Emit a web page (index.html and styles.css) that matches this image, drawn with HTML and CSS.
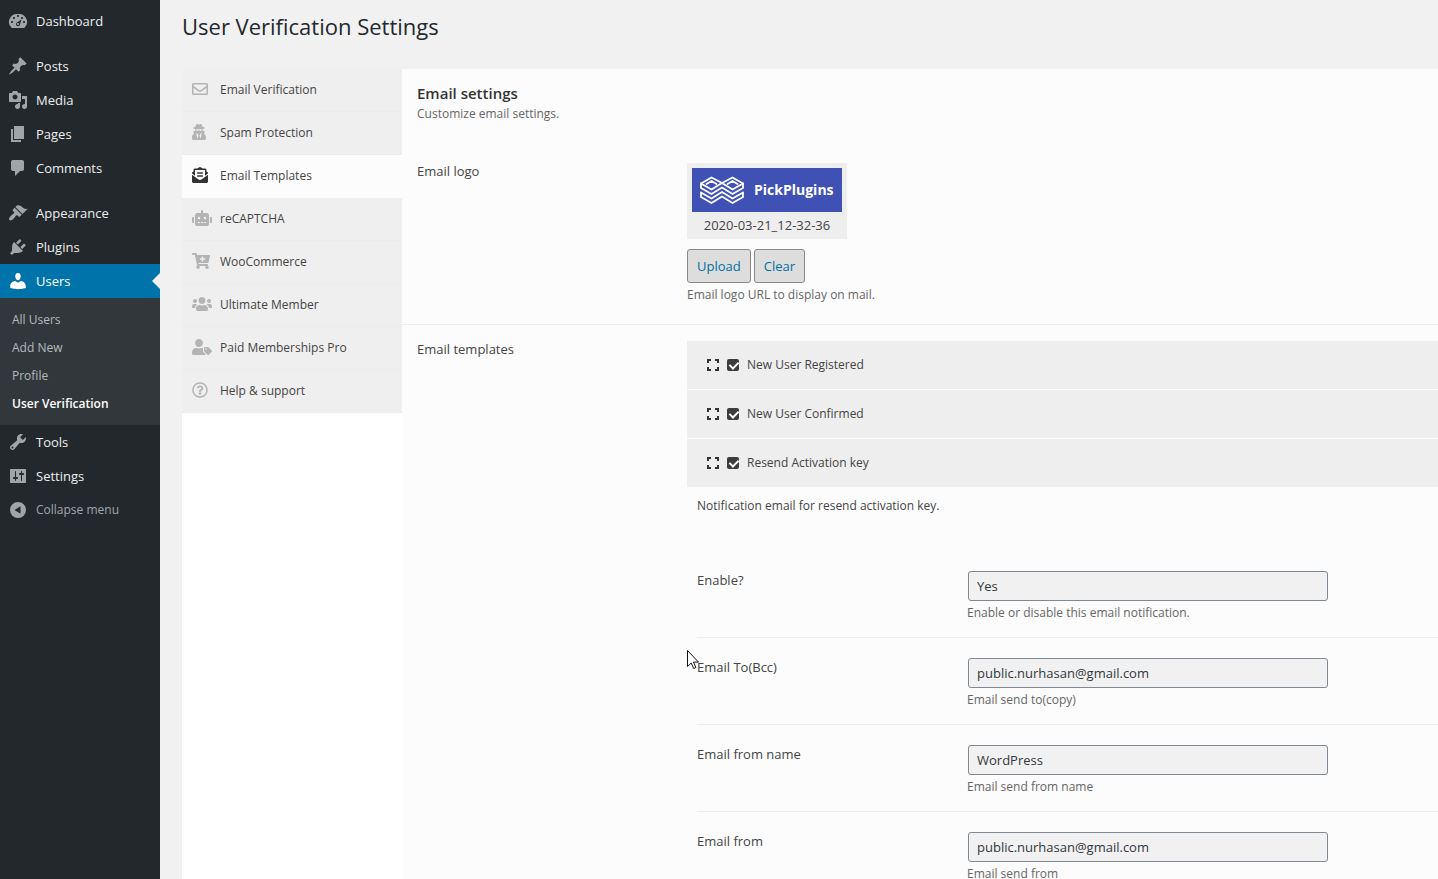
FILE: index.html
```html
<!DOCTYPE html>
<html lang="en">
<head>
<meta charset="utf-8">
<meta name="viewport" content="width=device-width, initial-scale=1">
<title>User Verification Settings</title>
<link rel="stylesheet" href="styles.css">
</head>
<body>
<div class="app">
  <nav class="menu" aria-label="Main menu">
    <ul class="menu-list">
      <li><a class="menu-link" href="#"><svg class="menu-icon" viewBox="0 0 20 20"><path fill-rule="evenodd" d="M3.76 17h12.48A7.998 7.998 0 0 0 10 3a7.998 7.998 0 0 0-6.24 14zM10 4c.55 0 1 .45 1 1s-.45 1-1 1-1-.45-1-1 .45-1 1-1zM6 6c.55 0 1 .45 1 1s-.45 1-1 1-1-.45-1-1 .45-1 1-1zm8 0c.55 0 1 .45 1 1s-.45 1-1 1-1-.45-1-1 .45-1 1-1zm-.5 2.500L12 13.200c0 1.100-.9 2-2 2s-2-.9-2-2c0-.57.24-1.080.63-1.450zM4 10c.55 0 1 .45 1 1s-.45 1-1 1-1-.45-1-1 .45-1 1-1zm12 0c.55 0 1 .45 1 1s-.45 1-1 1-1-.45-1-1 .45-1 1-1zm-5 3c0-.55-.45-1-1-1s-1 .45-1 1 .45 1 1 1 1-.45 1-1z"/></svg>Dashboard</a></li>
      <li class="group-start"><a class="menu-link" href="#"><svg class="menu-icon" viewBox="0 0 20 20"><path d="M10.44 3.02l1.82-1.82 6.36 6.35-1.83 1.82c-1.05-.68-2.48-.57-3.41.36l-.75.75c-.92.93-1.04 2.35-.35 3.41l-1.83 1.82-2.41-2.41-2.8 2.79c-.42.42-3.38 2.71-3.8 2.29s1.86-3.39 2.28-3.81l2.79-2.79L4.1 9.36l1.83-1.82c1.05.69 2.48.57 3.4-.36l.75-.75c.93-.92 1.05-2.35.36-3.41z"/></svg>Posts</a></li>
      <li><a class="menu-link" href="#"><svg class="menu-icon" viewBox="0 0 20 20"><path d="M13 11V4c0-.55-.45-1-1-1h-1.67L9 1H5L3.67 3H2c-.55 0-1 .45-1 1v7c0 .55.45 1 1 1h10c.55 0 1-.45 1-1zM7 4.5c1.38 0 2.5 1.12 2.5 2.5S8.38 9.5 7 9.5 4.5 8.38 4.5 7 5.62 4.5 7 4.5zM14 6h5v10.5c0 1.38-1.12 2.5-2.5 2.5S14 17.88 14 16.5s1.12-2.5 2.5-2.5c.17 0 .34.02.5.05V9h-3V6zm-4 8.05V13h2v3.5c0 1.38-1.12 2.5-2.5 2.5S7 17.88 7 16.5 8.12 14 9.5 14c.17 0 .34.02.5.05z"/></svg>Media</a></li>
      <li><a class="menu-link" href="#"><svg class="menu-icon" viewBox="0 0 20 20"><path d="M6 15V2h10v13H6zm-1 1h8v2H3V5h2v11z"/></svg>Pages</a></li>
      <li><a class="menu-link" href="#"><svg class="menu-icon" viewBox="0 0 20 20"><path d="M5 2h9c1.1 0 2 .9 2 2v7c0 1.1-.9 2-2 2h-2l-5 5v-5H5c-1.1 0-2-.9-2-2V4c0-1.1.9-2 2-2z"/></svg>Comments</a></li>
      <li class="group-start"><a class="menu-link" href="#"><svg class="menu-icon" viewBox="0 0 20 20"><path d="M14.48 11.06L7.41 3.99l1.5-1.5c.5-.56 2.3-.47 3.51.32 1.21.8 1.43 1.28 2.91 2.1 1.18.64 2.45 1.26 4.45.85zm-.71.71L6.7 4.7 4.93 6.47c-.39.39-.39 1.02 0 1.41l1.06 1.06c.39.39.39 1.03 0 1.42-.6.6-1.43 1.11-2.21 1.69-.35.26-.7.53-1.01.84C1.43 14.23.4 16.08 1.4 17.07c.99 1 2.84-.03 4.18-1.36.31-.31.58-.66.85-1.02.57-.78 1.08-1.61 1.69-2.21.39-.39 1.02-.39 1.41 0l1.06 1.06c.39.39 1.02.39 1.41 0z"/></svg>Appearance</a></li>
      <li><a class="menu-link" href="#"><svg class="menu-icon" viewBox="0 0 20 20"><path d="M13.11 4.36L9.87 7.6 8 5.73l3.24-3.24c.35-.34 1.05-.2 1.56.32.52.51.66 1.21.31 1.55zm-8 1.77l.91-1.12 9.01 9.01-1.19.84c-.71.71-2.63 1.16-3.82 1.16H6.14L4.9 17.26c-.59.59-1.54.59-2.12 0-.59-.58-.59-1.53 0-2.12l1.24-1.24v-3.88c0-1.13.4-3.19 1.09-3.89zm7.26 3.97l3.24-3.24c.34-.35 1.04-.21 1.55.31.52.51.66 1.21.31 1.55l-3.24 3.25z"/></svg>Plugins</a></li>
      <li>
        <a class="menu-link is-open" href="#"><svg class="menu-icon" viewBox="0 0 20 20"><path d="M10 9.250c-2.270 0-2.730-3.440-2.730-3.440C7 4.020 7.820 2 9.970 2c2.160 0 2.980 2.020 2.710 3.810 0 0-.41 3.440-2.680 3.440zM7.200 10 10 11.800 12.800 10c2.390 0 4.940 2.330 4.940 4.530v2.490s-3.650 1.130-7.740 1.130c-4.150 0-7.740-1.130-7.740-1.130v-2.490c0-2.250 2.440-4.530 4.940-4.530z"/></svg>Users</a>
        <ul class="submenu">
          <li><a class="submenu-link" href="#">All Users</a></li>
          <li><a class="submenu-link" href="#">Add New</a></li>
          <li><a class="submenu-link" href="#">Profile</a></li>
          <li><a class="submenu-link is-current" href="#" aria-current="page">User Verification</a></li>
        </ul>
      </li>
      <li><a class="menu-link" href="#"><svg class="menu-icon" viewBox="0 0 20 20"><path d="M16.68 9.77c-1.34 1.34-3.3 1.67-4.95.99l-5.41 6.52c-.99.99-2.59.99-3.58 0s-.99-2.59 0-3.57l6.52-5.42c-.68-1.65-.35-3.61.99-4.95 1.28-1.28 3.12-1.62 4.72-1.06l-2.89 2.89 2.82 2.82 2.86-2.87c.53 1.58.18 3.39-1.08 4.65zM3.81 16.21c.4.39 1.04.39 1.43 0 .4-.4.4-1.04 0-1.43-.39-.4-1.03-.4-1.43 0-.39.39-.39 1.03 0 1.43z"/></svg>Tools</a></li>
      <li><a class="menu-link" href="#"><svg class="menu-icon" viewBox="0 0 20 20"><path d="M18 16V4c0-.55-.45-1-1-1H3c-.55 0-1 .45-1 1v12c0 .55.45 1 1 1h14c.55 0 1-.45 1-1zM8 11h1c.55 0 1 .45 1 1s-.45 1-1 1H8v1.5c0 .28-.22.5-.5.5s-.5-.22-.5-.5V13H6c-.55 0-1-.45-1-1s.45-1 1-1h1V5.500c0-.28.22-.5.5-.5s.5.22.5.5V11zm5-2h-1c-.55 0-1-.45-1-1s.45-1 1-1h1V5.500c0-.28.22-.5.5-.5s.5.22.5.5V7h1c.55 0 1 .45 1 1s-.45 1-1 1h-1v5.500c0 .28-.22.5-.5.5s-.5-.22-.5-.5V9z"/></svg>Settings</a></li>
      <li><button class="menu-link collapse" type="button"><svg class="menu-icon" viewBox="0 0 20 20"><path fill-rule="evenodd" d="M10 2a8 8 0 1 1 0 16a8 8 0 0 1 0-16zM12.500 6.200v7.600L6.500 10z"/></svg>Collapse menu</button></li>
    </ul>
  </nav>

  <main class="content">
    <h1 class="page-title">User Verification Settings</h1>
    <div class="settings">
      <nav class="tabs" aria-label="Settings sections">
        <a class="tab" href="#"><svg class="tab-icon" viewBox="0 0 512 512"><path d="M464 64H48C21.490 64 0 85.490 0 112v288c0 26.510 21.490 48 48 48h416c26.510 0 48-21.490 48-48V112c0-26.510-21.490-48-48-48zm0 48v40.805c-22.422 18.259-58.168 46.651-134.587 106.490-16.841 13.247-50.201 45.072-73.413 44.701-23.208.375-56.579-31.459-73.413-44.701C106.180 199.465 70.425 171.067 48 152.805V112h416zM48 400V214.398c22.914 18.251 55.409 43.862 104.938 82.646 21.857 17.205 60.134 55.186 103.062 54.955 42.717.231 80.509-37.199 103.053-54.947 49.528-38.783 82.032-64.401 104.947-82.653V400H48z"/></svg>Email Verification</a>
        <a class="tab" href="#"><svg class="tab-icon" viewBox="0 0 448 512"><path d="M383.9 308.3l23.9-62.6c4-10.5-3.7-21.7-15-21.7h-58.5c11-18.9 17.8-40.6 17.8-64v-.3c39.2-7.8 64-19.1 64-31.7 0-13.3-27.3-25.1-70.100-33-9.200-32.800-27-65.800-40.600-82.800-9.500-11.900-25.900-15.600-39.500-8.800l-27.600 13.800c-9 4.500-19.600 4.500-28.600 0L182.100 3.400c-13.600-6.800-30-3.100-39.500 8.800-13.500 17-31.400 50-40.600 82.800-42.700 7.900-70 19.700-70 33 0 12.600 24.800 23.900 64 31.700v.3c0 23.400 6.800 45.100 17.800 64H56.300c-11.500 0-19.200 11.700-14.700 22.300l25.800 60.200C27.300 329.800 0 372.700 0 422.400v44.800C0 491.900 20.100 512 44.800 512h358.400c24.700 0 44.800-20.100 44.800-44.800v-44.800c0-48.400-25.800-90.400-64.100-114.100zM176 480l-41.600-192 49.600 32 24 40-32 120zm96 0l-32-120 24-40 49.600-32L272 480zm41.700-298.500c-3.900 11.900-7 24.600-16.500 33.400-10.100 9.300-48 22.400-64-25-2.800-8.400-15.400-8.400-18.300 0-17 50.200-56 32.400-64 25-9.500-8.800-12.700-21.500-16.500-33.400-.8-2.500-6.300-5.700-6.300-5.800v-10.800c28.300 3.600 61 5.800 96 5.800s67.700-2.100 96-5.800v10.800c-.1.1-5.600 3.200-6.400 5.800z"/></svg>Spam Protection</a>
        <a class="tab is-active" href="#" aria-current="true"><svg class="tab-icon" viewBox="0 0 512 512"><path d="M176 216h160c8.840 0 16-7.160 16-16v-16c0-8.840-7.160-16-16-16H176c-8.840 0-16 7.160-16 16v16c0 8.840 7.160 16 16 16zm-16 80c0 8.840 7.160 16 16 16h160c8.840 0 16-7.160 16-16v-16c0-8.840-7.160-16-16-16H176c-8.840 0-16 7.160-16 16v16zm96 121.130c-16.420 0-32.840-5.060-46.860-15.190L0 250.860V464c0 26.510 21.490 48 48 48h416c26.510 0 48-21.490 48-48V250.860L302.860 401.940c-14.020 10.120-30.440 15.190-46.860 15.190zm237.610-254.180c-8.850-6.940-17.240-13.470-29.610-22.810V96c0-26.510-21.490-48-48-48h-77.550c-3.040-2.200-5.870-4.260-9.040-6.560C312.600 29.170 279.200-.35 256 0c-23.200-.35-56.590 29.170-73.410 41.440-3.170 2.300-6 4.360-9.040 6.560H96c-26.510 0-48 21.490-48 48v44.140c-12.370 9.330-20.760 15.870-29.610 22.810A47.995 47.995 0 0 0 0 200.720v10.650l96 69.350V96h320v184.720l96-69.350v-10.650c0-14.740-6.780-28.670-18.390-37.770z"/></svg>Email Templates</a>
        <a class="tab" href="#"><svg class="tab-icon" viewBox="0 0 640 512"><path d="M32,224H64V416H32A32,32,0,0,1,0,384V256A32,32,0,0,1,32,224Zm512-48V448a64,64,0,0,1-64,64H160a64,64,0,0,1-64-64V176a80,80,0,0,1,80-80H288V32a32,32,0,0,1,64,0V96H464A80,80,0,0,1,544,176ZM264,256a40,40,0,1,0-40,40A40,40,0,0,0,264,256Zm-8,128H192v32h64Zm96,0H288v32h64ZM456,256a40,40,0,1,0-40,40A40,40,0,0,0,456,256Zm-8,128H384v32h64ZM640,256V384a32,32,0,0,1-32,32H576V224h32A32,32,0,0,1,640,256Z"/></svg>reCAPTCHA</a>
        <a class="tab" href="#"><svg class="tab-icon" viewBox="0 0 576 512"><path d="M504.717 320H211.572l6.545 32h268.418c15.401 0 26.816 14.301 23.403 29.319l-5.517 24.276C523.112 414.668 536 433.828 536 456c0 31.202-25.519 56.444-56.824 55.994-29.823-.429-54.350-24.631-55.155-54.447-.44-16.287 6.085-31.049 16.803-41.548H231.176C241.553 426.165 248 440.326 248 456c0 31.813-26.528 57.431-58.670 55.938-28.540-1.325-51.751-24.385-53.251-52.917-1.158-22.034 10.436-41.455 28.051-51.586L93.883 64H24C10.745 64 0 53.255 0 40V24C0 10.745 10.745 0 24 0h102.529c11.401 0 21.228 8.021 23.513 19.190L159.208 64H551.990c15.401 0 26.816 14.301 23.403 29.319l-47.273 208C525.637 312.246 515.923 320 504.717 320zM408 168h-48v-40c0-8.837-7.163-16-16-16h-16c-8.837 0-16 7.163-16 16v40h-48c-8.837 0-16 7.163-16 16v16c0 8.837 7.163 16 16 16h48v40c0 8.837 7.163 16 16 16h16c8.837 0 16-7.163 16-16v-40h48c8.837 0 16-7.163 16-16v-16c0-8.837-7.163-16-16-16z"/></svg>WooCommerce</a>
        <a class="tab" href="#"><svg class="tab-icon" viewBox="0 0 640 512"><path d="M96 224c35.300 0 64-28.700 64-64s-28.700-64-64-64-64 28.700-64 64 28.700 64 64 64zm448 0c35.300 0 64-28.700 64-64s-28.700-64-64-64-64 28.700-64 64 28.700 64 64 64zm32 32h-64c-17.600 0-33.500 7.100-45.100 18.600 40.300 22.100 68.900 62 75.100 109.400h66c17.700 0 32-14.300 32-32v-32c0-35.300-28.700-64-64-64zm-256 0c61.900 0 112-50.100 112-112S381.900 32 320 32 208 82.100 208 144s50.100 112 112 112zm76.800 32h-8.300c-20.800 10-43.900 16-68.500 16s-47.600-6-68.500-16h-8.300C179.600 288 128 339.600 128 403.200V432c0 26.500 21.500 48 48 48h288c26.500 0 48-21.500 48-48v-28.800c0-63.600-51.600-115.200-115.200-115.200zm-223.700-13.400C161.500 263.100 145.600 256 128 256H64c-35.300 0-64 28.700-64 64v32c0 17.700 14.300 32 32 32h65.900c6.300-47.400 34.900-87.300 75.200-109.400z"/></svg>Ultimate Member</a>
        <a class="tab" href="#"><svg class="tab-icon" viewBox="0 0 640 512"><path d="M630.600 364.900l-90.300-90.200c-12-12-28.300-18.700-45.300-18.700h-79.300c-17.700 0-32 14.300-32 32v79.200c0 17 6.700 33.200 18.700 45.200l90.300 90.200c12.500 12.500 32.800 12.500 45.300 0l92.500-92.500c12.600-12.500 12.600-32.700.1-45.200zm-182.800-21c-13.300 0-24-10.700-24-24s10.700-24 24-24 24 10.700 24 24c0 13.200-10.700 24-24 24zm-223.800-88c70.700 0 128-57.300 128-128C352 57.300 294.700 0 224 0S96 57.300 96 128c0 70.600 57.300 127.900 128 127.900zm127.800 111.200V294c-12.200-3.600-24.900-6.200-38.200-6.200h-16.700c-22.200 10.200-46.900 16-72.900 16s-50.600-5.800-72.900-16h-16.700C60.200 287.900 0 348.100 0 422.300v41.600c0 26.500 21.500 48 48 48h352c15.500 0 29.100-7.500 37.900-18.900l-58-58c-18.100-18.100-28.100-42.200-28.100-67.900z"/></svg>Paid Memberships Pro</a>
        <a class="tab" href="#"><svg class="tab-icon" viewBox="0 0 512 512"><path d="M256 8C119.043 8 8 119.083 8 256c0 136.997 111.043 248 248 248s248-111.003 248-248C504 119.083 392.957 8 256 8zm0 448c-110.532 0-200-89.431-200-200 0-110.495 89.472-200 200-200 110.491 0 200 89.471 200 200 0 110.530-89.431 200-200 200zm107.244-255.200c0 67.052-72.421 68.084-72.421 92.863V300c0 6.627-5.373 12-12 12h-45.647c-6.627 0-12-5.373-12-12v-8.659c0-35.745 27.100-50.034 47.579-61.516 17.561-9.845 28.324-16.541 28.324-29.579 0-17.246-21.999-28.693-39.784-28.693-23.189 0-33.894 10.977-48.942 29.969-4.057 5.120-11.460 6.071-16.666 2.124l-27.824-21.098c-5.107-3.872-6.251-11.066-2.644-16.363C184.846 131.491 214.940 112 261.794 112c49.071 0 101.450 38.304 101.450 88.800zM298 368c0 23.159-18.841 42-42 42s-42-18.841-42-42 18.841-42 42-42 42 18.841 42 42z"/></svg>Help &amp; support</a>
      </nav>

      <section class="panel">
        <h2 class="section-title">Email settings</h2>
        <p class="section-text">Customize email settings.</p>

        <div class="setting">
          <div class="setting-label">Email logo</div>
          <div class="setting-field">
            <figure class="preview">
              <div class="brand">
                <svg class="brand-mark" viewBox="0 0 44 28"><g fill="none" stroke="#fff" stroke-width="1.800" stroke-linejoin="round" stroke-linecap="round"><path d="M1 7.500 11.500 1.500 22 7 32.500 1.500 43 7.500 32.500 13.500 22 7 11.500 13.500z"/><path d="M6.500 8 11.500 5 16.500 8M27.500 8 32.500 5 37.500 8"/><path d="M1 12 11.500 18 22 11.500 32.500 18 43 12M1 16.500 11.500 22.500 22 16 32.500 22.500 43 16.500M1 21 11.500 27 22 20.500 32.500 27 43 21M1 7.500V12M43 7.500V12M1 16.500V21M43 16.500V21"/></g></svg>
                <span>PickPlugins</span>
              </div>
              <figcaption class="preview-name">2020-03-21_12-32-36</figcaption>
            </figure>
            <div class="buttons">
              <button class="button" type="button">Upload</button>
              <button class="button" type="button">Clear</button>
            </div>
            <p class="hint">Email logo URL to display on mail.</p>
          </div>
        </div>

        <div class="setting">
          <div class="setting-label">Email templates</div>
          <div class="setting-field">
            <div class="template-head">
              <svg class="expand" viewBox="0 0 12 12"><path d="M1 4V1h3M8 1h3v3M11 8v3H8M4 11H1V8"/></svg>
              <input class="check" type="checkbox" id="t1" checked><label for="t1">New User Registered</label>
            </div>
            <div class="template-head">
              <svg class="expand" viewBox="0 0 12 12"><path d="M1 4V1h3M8 1h3v3M11 8v3H8M4 11H1V8"/></svg>
              <input class="check" type="checkbox" id="t2" checked><label for="t2">New User Confirmed</label>
            </div>
            <div class="template-head">
              <svg class="expand" viewBox="0 0 12 12"><path d="M1 4V1h3M8 1h3v3M11 8v3H8M4 11H1V8"/></svg>
              <input class="check" type="checkbox" id="t3" checked><label for="t3">Resend Activation key</label>
            </div>
            <div class="template-body">
              <p class="template-text">Notification email for resend activation key.</p>
              <div class="option">
                <label class="option-label" for="enable">Enable?</label>
                <div class="option-field">
                  <select class="control" id="enable"><option>Yes</option><option>No</option></select>
                  <p class="hint">Enable or disable this email notification.</p>
                </div>
              </div>
              <div class="option">
                <label class="option-label" for="bcc">Email To(Bcc)</label>
                <div class="option-field">
                  <input class="control" id="bcc" type="text" value="public.nurhasan@gmail.com">
                  <p class="hint">Email send to(copy)</p>
                </div>
              </div>
              <div class="option">
                <label class="option-label" for="from-name">Email from name</label>
                <div class="option-field">
                  <input class="control" id="from-name" type="text" value="WordPress">
                  <p class="hint">Email send from name</p>
                </div>
              </div>
              <div class="option">
                <label class="option-label" for="from">Email from</label>
                <div class="option-field">
                  <input class="control" id="from" type="text" value="public.nurhasan@gmail.com">
                  <p class="hint">Email send from</p>
                </div>
              </div>
            </div>
          </div>
        </div>
      </section>
    </div>
  </main>
</div>
<svg class="pointer" viewBox="0 0 12 19" aria-hidden="true"><path d="M.5.5v16l3.700-3.500 2.500 5.500 2.200-1-2.400-5.400h5z" fill="#fff" stroke="#111"/></svg>
</body>
</html>
```
FILE: styles.css
```css
* {
  box-sizing: border-box;
}

body {
  margin: 0;
  position: relative;
  background: #f1f1f1;
  color: #444;
  font: 13px/20px "Open Sans", "Noto Sans", sans-serif;
}

h1, h2, p, ul, figure {
  margin: 0;
  padding: 0;
}

ul {
  list-style: none;
}

a {
  text-decoration: none;
}

button, input, select {
  font: inherit;
}

.app {
  display: flex;
  min-height: 100vh;
}

/* Main menu */
.menu {
  flex: 0 0 160px;
  background: #23282d;
}

.menu-list {
  padding-top: 4px;
}

.group-start {
  margin-top: 11px;
}

.menu-link {
  position: relative;
  display: flex;
  align-items: center;
  gap: 8px;
  width: 100%;
  height: 34px;
  padding: 0 8px;
  color: #eee;
}

.menu-icon {
  width: 20px;
  height: 20px;
  fill: #a0a5aa;
}

.menu-link.is-open {
  background: #0073aa;
  color: #fff;
}

.is-open .menu-icon {
  fill: #fff;
}

.menu-link.is-open::after {
  content: "";
  position: absolute;
  top: 9px;
  right: 0;
  border: 8px solid transparent;
  border-left-width: 0;
  border-right-color: #f1f1f1;
}

.collapse {
  border: 0;
  background: none;
  color: #a0a5aa;
  font-size: 12px;
}

.submenu {
  padding: 8px 0 7px;
  background: #32373c;
}

.submenu-link {
  display: block;
  padding: 4px 12px;
  color: #b4b9be;
  font-size: 12px;
}

.submenu-link.is-current {
  color: #fff;
  font-weight: 600;
}

/* Page */
.content {
  flex: 1;
  min-width: 0;
  display: flex;
  flex-direction: column;
  padding-left: 22px;
}

.page-title {
  padding: 11px 0 28px;
  color: #23282d;
  font-size: 22px;
  font-weight: 400;
  line-height: 30px;
}

.settings {
  flex: 1;
  display: flex;
  background: #fff;
}

.tabs {
  flex: 0 0 220px;
}

.tab {
  display: grid;
  grid-template-columns: 28px 1fr;
  align-items: center;
  height: 43px;
  padding-left: 10px;
  border-bottom: 1px solid #ececec;
  background: #efefef;
  color: #444;
  font-size: 12px;
}

.tab-icon {
  height: 16px;
  margin-bottom: 2px;
  fill: #b4b4b4;
}

.tab.is-active {
  border-color: #fcfcfc;
  background: #fcfcfc;
}

.is-active .tab-icon {
  fill: #333;
}

.panel {
  flex: 1;
  min-width: 0;
  padding-top: 14px;
  background: #fcfcfc;
}

.section-title {
  padding-left: 15px;
  color: #333;
  font-size: 15px;
  font-weight: 600;
  line-height: 20px;
}

.section-text {
  padding: 1px 15px 23px;
  color: #666;
  font-size: 12px;
}

.setting {
  display: grid;
  grid-template-columns: 270px 1fr;
  padding: 16px 0 19px 15px;
  border-bottom: 1px solid #eee;
}

.setting-label {
  line-height: 16px;
}

.hint {
  padding-top: 2px;
  color: #666;
  font-size: 12px;
}

.preview {
  width: 160px;
  padding: 5px 5px 4px;
  background: #eee;
  text-align: center;
}

.brand {
  display: flex;
  align-items: center;
  gap: 10px;
  height: 44px;
  padding-left: 8px;
  background: #3f51b5;
  color: #fff;
  font-size: 14px;
  font-weight: 700;
}

.brand-mark {
  width: 44px;
  height: 28px;
}

.preview-name {
  padding-top: 3px;
}

.buttons {
  display: flex;
  gap: 3px;
  margin-top: 10px;
}

.button {
  height: 34px;
  padding: 0 9px;
  border: 1px solid #888;
  border-radius: 3px;
  background: #ddd;
  color: #0071a1;
}

.template-head {
  display: flex;
  align-items: center;
  height: 48px;
  margin-bottom: 1px;
  padding-left: 20px;
  background: #eee;
  font-size: 12px;
}

.expand {
  width: 12px;
  height: 12px;
  fill: none;
  stroke: #333;
  stroke-width: 2;
}

.check {
  appearance: none;
  position: relative;
  width: 12px;
  height: 12px;
  margin: 0 8px;
  border-radius: 2px;
  background: #3c3c3c;
}

.check:checked::after {
  content: "";
  position: absolute;
  top: 1px;
  left: 4px;
  width: 4px;
  height: 7px;
  border: solid #fff;
  border-width: 0 2px 2px 0;
  transform: rotate(45deg);
}

.template-body {
  padding: 8px 0 10px 10px;
}

.template-text {
  padding-bottom: 35px;
  font-size: 12px;
}

.option {
  display: grid;
  grid-template-columns: 270px 1fr;
  padding: 20px 0 14px;
  border-bottom: 1px solid #eee;
}

.option-label {
  line-height: 18px;
}

.option-field {
  min-width: 0;
}

.control {
  appearance: none;
  display: block;
  width: 360px;
  max-width: 100%;
  height: 30px;
  margin: 0 1px;
  padding: 0 8px;
  border: 1px solid #7e8993;
  border-radius: 3px;
  background: #f1f1f1;
  color: #32373c;
}

.pointer {
  position: absolute;
  top: 650px;
  left: 687px;
  width: 12px;
  height: 19px;
}
```
